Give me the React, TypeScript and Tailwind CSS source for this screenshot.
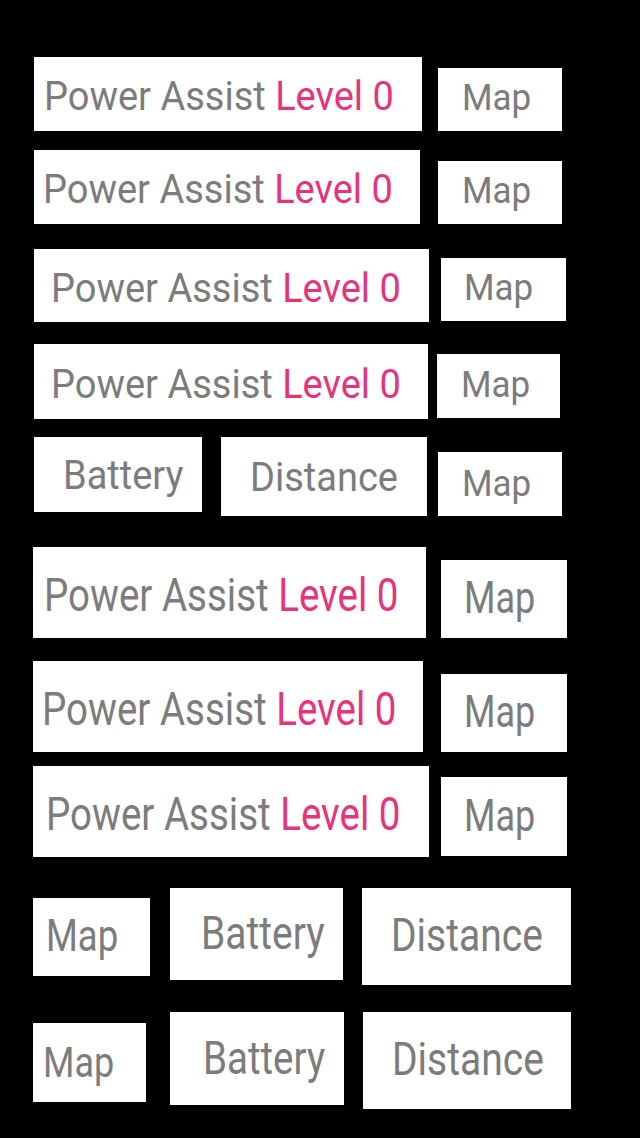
import React from "react";

const box = "flex items-center bg-white shrink-0";
const txt = "inline-block whitespace-nowrap leading-none font-['Roboto',sans-serif] text-[#7c7c7c]";
const pink = "text-[#e8337a]";

function PA({ cls }: { cls: string }) {
  return (
    <span className={`${txt} ${cls}`}>
      Power Assist <span className={pink}>Level 0</span>
    </span>
  );
}

export default function App() {
  return (
    <div className="min-h-[1138px] w-[640px] bg-black pt-[57px] flex flex-col">
      {/* Row 1 */}
      <div className="flex items-start">
        <div className={`${box} ml-[34px] w-[388px] h-[74px] pl-[10px]`}>
          <PA cls="text-[38px] scale-y-[1.08] translate-y-[2px]" />
        </div>
        <div className={`${box} ml-[16px] mt-[11px] w-[124px] h-[63px] pl-[24px]`}>
          <span className={`${txt} text-[35px] scale-y-[1.08] -translate-y-[2px]`}>Map</span>
        </div>
      </div>
      {/* Row 2 */}
      <div className="flex items-start mt-[19px]">
        <div className={`${box} ml-[34px] w-[386px] h-[74px] pl-[9px]`}>
          <PA cls="text-[38px] scale-y-[1.08] translate-y-[2px]" />
        </div>
        <div className={`${box} ml-[18px] mt-[11px] w-[124px] h-[63px] pl-[24px]`}>
          <span className={`${txt} text-[35px] scale-y-[1.08] -translate-y-[2px]`}>Map</span>
        </div>
      </div>
      {/* Row 3 */}
      <div className="flex items-start mt-[25px]">
        <div className={`${box} ml-[34px] w-[395px] h-[73px] pl-[17px]`}>
          <PA cls="text-[38px] scale-y-[1.08] translate-y-[2px]" />
        </div>
        <div className={`${box} ml-[12px] mt-[9px] w-[125px] h-[63px] pl-[23px]`}>
          <span className={`${txt} text-[35px] scale-y-[1.08] -translate-y-[2px]`}>Map</span>
        </div>
      </div>
      {/* Row 4 */}
      <div className="flex items-start mt-[22px]">
        <div className={`${box} ml-[34px] w-[394px] h-[75px] pl-[17px]`}>
          <PA cls="text-[38px] scale-y-[1.08] translate-y-[2px]" />
        </div>
        <div className={`${box} ml-[9px] mt-[10px] w-[123px] h-[64px] pl-[24px]`}>
          <span className={`${txt} text-[35px] scale-y-[1.08] -translate-y-[2px]`}>Map</span>
        </div>
      </div>
      {/* Row 5 */}
      <div className="flex items-start mt-[18px]">
        <div className={`${box} ml-[34px] w-[168px] h-[75px] pl-[29px]`}>
          <span className={`${txt} text-[38px] scale-y-[1.08]`}>Battery</span>
        </div>
        <div className={`${box} ml-[19px] w-[206px] h-[79px] pl-[29px]`}>
          <span className={`${txt} text-[38px] scale-y-[1.08]`}>Distance</span>
        </div>
        <div className={`${box} ml-[11px] mt-[15px] w-[124px] h-[64px] pl-[24px]`}>
          <span className={`${txt} text-[35px] scale-y-[1.08] -translate-y-[1px]`}>Map</span>
        </div>
      </div>
      {/* Row 6 */}
      <div className="flex items-start mt-[31px]">
        <div className={`${box} ml-[33px] w-[393px] h-[91px] pl-[11px]`}>
          <PA cls="text-[38.5px] scale-y-[1.22] translate-y-[3px]" />
        </div>
        <div className={`${box} ml-[15px] mt-[13px] w-[126px] h-[78px] pl-[23px]`}>
          <span className={`${txt} text-[36px] scale-y-[1.22] -translate-y-[1px]`}>Map</span>
        </div>
      </div>
      {/* Row 7 */}
      <div className="flex items-start mt-[23px]">
        <div className={`${box} ml-[33px] w-[390px] h-[91px] pl-[9px]`}>
          <PA cls="text-[38.5px] scale-y-[1.22] translate-y-[3px]" />
        </div>
        <div className={`${box} ml-[18px] mt-[13px] w-[126px] h-[78px] pl-[23px]`}>
          <span className={`${txt} text-[36px] scale-y-[1.22] -translate-y-[1px]`}>Map</span>
        </div>
      </div>
      {/* Row 8 */}
      <div className="flex items-start mt-[14px]">
        <div className={`${box} ml-[33px] w-[396px] h-[91px] pl-[13px]`}>
          <PA cls="text-[38.5px] scale-y-[1.22] translate-y-[3px]" />
        </div>
        <div className={`${box} ml-[12px] mt-[11px] w-[126px] h-[79px] pl-[23px]`}>
          <span className={`${txt} text-[36px] scale-y-[1.22] -translate-y-[1px]`}>Map</span>
        </div>
      </div>
      {/* Row 9 */}
      <div className="flex items-start mt-[31px]">
        <div className={`${box} ml-[33px] mt-[10px] w-[117px] h-[78px] pl-[13px]`}>
          <span className={`${txt} text-[36.5px] scale-y-[1.2]`}>Map</span>
        </div>
        <div className={`${box} ml-[20px] w-[173px] h-[92px] pl-[31px]`}>
          <span className={`${txt} text-[39px] scale-y-[1.2]`}>Battery</span>
        </div>
        <div className={`${box} ml-[19px] w-[209px] h-[97px] pl-[29px]`}>
          <span className={`${txt} text-[39px] scale-y-[1.2]`}>Distance</span>
        </div>
      </div>
      {/* Row 10 */}
      <div className="flex items-start mt-[27px]">
        <div className={`${box} ml-[33px] mt-[11px] w-[113px] h-[79px] pl-[10px]`}>
          <span className={`${txt} text-[36px] scale-y-[1.2]`}>Map</span>
        </div>
        <div className={`${box} ml-[24px] w-[174px] h-[93px] pl-[33px]`}>
          <span className={`${txt} text-[38.5px] scale-y-[1.2]`}>Battery</span>
        </div>
        <div className={`${box} ml-[19px] w-[208px] h-[97px] pl-[29px]`}>
          <span className={`${txt} text-[39px] scale-y-[1.2]`}>Distance</span>
        </div>
      </div>
    </div>
  );
}
